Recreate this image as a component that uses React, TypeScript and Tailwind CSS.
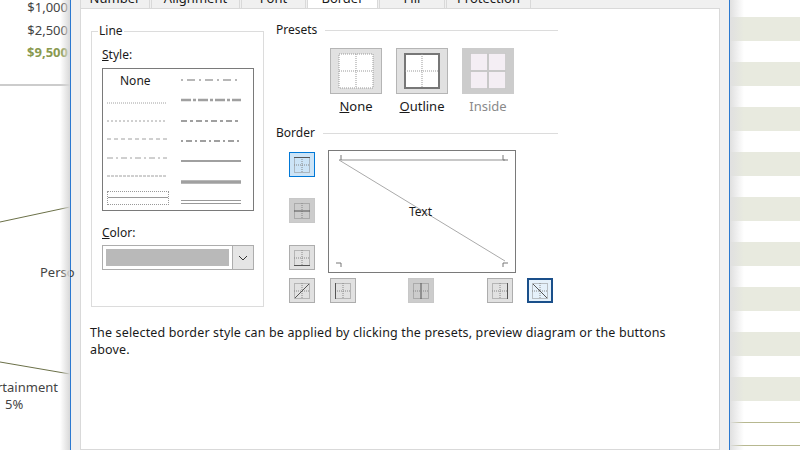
import React from "react";

const F = { fontFamily: '"Noto Sans","Open Sans",sans-serif' };

function Grid({ top, bottom, left, right, diagUp, diagDown, midH, midV, size = 16 }: any) {
  const s = size;
  const d = "1 1";
  const c = "#888";
  const solid = "#555";
  return (
    <svg width={s} height={s} viewBox={`0 0 ${s} ${s}`}>
      <rect x="0.5" y="0.5" width={s - 1} height={s - 1} fill="none" stroke={c} strokeDasharray={d} />
      <line x1={s / 2} y1="0" x2={s / 2} y2={s} stroke={midV ? solid : c} strokeDasharray={midV ? undefined : d} />
      <line x1="0" y1={s / 2} x2={s} y2={s / 2} stroke={midH ? solid : c} strokeDasharray={midH ? undefined : d} />
      {top && <line x1="0" y1="0.5" x2={s} y2="0.5" stroke={solid} />}
      {bottom && <line x1="0" y1={s - 0.5} x2={s} y2={s - 0.5} stroke={solid} />}
      {left && <line x1="0.5" y1="0" x2="0.5" y2={s} stroke={solid} />}
      {right && <line x1={s - 0.5} y1="0" x2={s - 0.5} y2={s} stroke={solid} />}
      {diagUp && <line x1="1" y1={s - 1} x2={s - 1} y2="1" stroke={solid} />}
      {diagDown && <line x1="1" y1="1" x2={s - 1} y2={s - 1} stroke={solid} />}
    </svg>
  );
}

function Btn({ children, sel, dis, dark, cls }: any) {
  return (
    <div
      className={
        "w-[26px] h-[25px] flex items-center justify-center border " +
        (dark
          ? "border-[#1a4f8a] border-2 bg-[#e5f1fb] "
          : sel
          ? "border-[#0078d7] bg-[#cce4f7] "
          : dis
          ? "border-[#c8c8c8] bg-[#cccccc] "
          : "border-[#adadad] bg-[#e1e1e1] ") +
        (cls || "")
      }
    >
      {children}
    </div>
  );
}

function LineSample({ dash, w = 2, dbl }: any) {
  return (
    <svg width="60" height="6">
      {dbl ? (
        <>
          <line x1="0" y1="1.5" x2="60" y2="1.5" stroke="#999" />
          <line x1="0" y1="4.5" x2="60" y2="4.5" stroke="#999" />
        </>
      ) : (
        <line x1="0" y1="3" x2="60" y2="3" stroke="#a0a0a0" strokeWidth={w} strokeDasharray={dash} />
      )}
    </svg>
  );
}

export default function App() {
  const tabs = [
    ["Number", 70],
    ["Alignment", 89],
    ["Font", 65],
    ["Border", 71],
    ["Fill", 66],
    ["Protection", 85],
  ] as const;
  const stripes = [17, 62, 107, 152, 197, 242, 287, 332, 377];
  return (
    <div className="w-[800px] h-[450px] overflow-hidden bg-white flex text-[#1a1a1a]" style={F}>
      {/* left sheet */}
      <div className="relative w-[70px] h-full text-[13px] text-[#444]">
        <div className="absolute right-[2px] top-[-2px]">$1,000</div>
        <div className="absolute right-[2px] top-[21px]">$2,500</div>
        <div className="absolute right-[2px] top-[43px] font-bold text-[#8a9a50]">$9,500</div>
        <svg className="absolute left-0 top-0" width="70" height="450">
          <line x1="0" y1="85" x2="70" y2="85" stroke="#999" />
          <line x1="0" y1="222" x2="70" y2="207" stroke="#6b7048" />
          <line x1="0" y1="362" x2="70" y2="374" stroke="#6b7048" />
        </svg>
        <div className="absolute left-[40px] top-[263px]">Perso</div>
        <div className="absolute left-[-3px] top-[378px]">rtainment</div>
        <div className="absolute left-[5px] top-[395px]">5%</div>
        <div className="absolute right-0 top-0 h-full w-[10px] bg-gradient-to-r from-transparent to-[#d8d8d8]" />
      </div>
      {/* dialog */}
      <div className="w-[660px] h-full bg-[#f0f0f0] border-x border-[#2b79d0] flex flex-col px-[9px]">
        <div className="h-[8px] flex">
          {tabs.map(([t, w]) => (
            <div
              key={t}
              style={{ width: w }}
              className={
                "h-[8px] border-x border-[#d9d9d9] text-[13px] leading-[16px] flex justify-center items-start mr-[1px] overflow-hidden " +
                (t === "Border" ? "bg-white" : "bg-[#f0f0f0]")
              }
            >
              <span className="-mt-[10px] whitespace-nowrap">{t}</span>
            </div>
          ))}
        </div>
        <div className="flex-1 bg-white border border-[#d9d9d9] relative text-[12px]">
          {/* Line group */}
          <div className="absolute left-[10px] top-[22px] w-[173px] h-[276px] border border-[#dcdcdc]">
            <span className="absolute left-[6px] top-[-10px] bg-white px-[1px] leading-[18px]">Line</span>
            <div className="absolute left-[10px] top-[15px] leading-[16px]"><u>S</u>tyle:</div>
            <div className="absolute left-[10px] top-[36px] w-[152px] h-[143px] border border-[#7a7a7a] flex px-[4px] py-[5px] gap-[12px]">
              <div className="flex flex-col justify-between w-[62px]">
                <div className="text-[12px] leading-[14px] pl-[13px]">None</div>
                <LineSample dash="1 1" w={1} />
                <LineSample dash="2 2" w={1} />
                <LineSample dash="4 3" w={1} />
                <LineSample dash="6 3 2 3" w={1} />
                <LineSample dash="3 1" w={1} />
                <div className="h-[14px] border border-dotted border-[#999] flex items-center"><div className="w-full border-t border-[#999]" /></div>
              </div>
              <div className="flex flex-col justify-between w-[62px] pt-[3px]">
                <LineSample dash="2 4 8 4" w={1.5} />
                <LineSample dash="10 2 3 2" w={2.5} />
                <LineSample dash="6 3 3 3" w={2} />
                <LineSample dash="2 3 6 3" w={2} />
                <LineSample w={2} />
                <LineSample w={3.5} />
                <LineSample dbl />
              </div>
            </div>
            <div className="absolute left-[10px] top-[193px] leading-[16px]"><u>C</u>olor:</div>
            <div className="absolute left-[10px] top-[213px] w-[152px] h-[25px] border border-[#adadad] flex">
              <div className="flex-1 m-[3px] bg-[#b9b9b9]" />
              <div className="w-[21px] bg-[#e5e5e5] border-l border-[#adadad] flex items-center justify-center">
                <svg width="10" height="6"><path d="M1 1 L5 5 L9 1" fill="none" stroke="#333" /></svg>
              </div>
            </div>
          </div>
          {/* Presets */}
          <div className="absolute left-[195px] top-[13px] w-[282px] flex items-center gap-[8px]">
            <span className="leading-[16px]">Presets</span>
            <div className="flex-1 border-t border-[#dcdcdc]" />
          </div>
          <div className="absolute left-[249px] top-[39px] flex gap-[14px]">
            {[
              ["None", "", ""],
              ["Outline", "o", ""],
              ["Inside", "", "i"],
            ].map(([n, o, i]) => (
              <div key={n} className="flex flex-col items-center w-[52px]">
                <div className={"w-[52px] h-[46px] border flex items-center justify-center " + (i ? "bg-[#cccccc] border-[#cccccc]" : "bg-[#e1e1e1] border-[#b5b5b5]")}>
                  <svg width="36" height="36">
                    {i ? (
                      <>
                        <rect x="0.5" y="0.5" width="35" height="35" fill="#f4eef4" stroke="#bbb" strokeDasharray="1 1" />
                        <line x1="18" y1="0" x2="18" y2="36" stroke="#c8c8c8" strokeWidth="2" />
                        <line x1="0" y1="18" x2="36" y2="18" stroke="#c8c8c8" strokeWidth="2" />
                      </>
                    ) : (
                      <>
                        <rect x="1" y="1" width="34" height="34" fill="#fff" stroke={o ? "#777" : "#999"} strokeWidth={o ? 2 : 1} strokeDasharray={o ? undefined : "1 1"} />
                        <line x1="18" y1="1" x2="18" y2="35" stroke="#999" strokeDasharray="1 1" />
                        <line x1="1" y1="18" x2="35" y2="18" stroke="#999" strokeDasharray="1 1" />
                      </>
                    )}
                  </svg>
                </div>
                <div className={"mt-[4px] text-[13px] leading-[16px] " + (i ? "text-[#8a8a8a]" : "")}>
                  {i ? n : <><u>{n[0]}</u>{n.slice(1)}</>}
                </div>
              </div>
            ))}
          </div>
          {/* Border */}
          <div className="absolute left-[195px] top-[116px] w-[282px] flex items-center gap-[8px]">
            <span className="leading-[16px]">Border</span>
            <div className="flex-1 border-t border-[#dcdcdc]" />
          </div>
          <div className="absolute left-[208px] top-[143px] flex flex-col">
            <Btn sel cls="mb-[21px]"><Grid top /></Btn>
            <Btn dis cls="mb-[22px]"><Grid midH /></Btn>
            <Btn cls="mb-[8px]"><Grid bottom /></Btn>
            <Btn><Grid diagUp /></Btn>
          </div>
          <div className="absolute left-[247px] top-[141px] w-[188px] h-[123px] border border-[#7a7a7a]">
            <svg className="absolute inset-0" width="186" height="121">
              <line x1="10" y1="9" x2="176" y2="9" stroke="#c8c8c8" strokeWidth="2" />
              <line x1="10" y1="9" x2="176" y2="110" stroke="#aaa" />
              <path d="M12 4 V9" stroke="#777" fill="none" />
              <path d="M174 4 V9 H179" stroke="#777" fill="none" />
              <path d="M7 112 H12 V116" stroke="#777" fill="none" />
              <path d="M179 112 H174 V116" stroke="#777" fill="none" />
            </svg>
            <div className="absolute left-[80px] top-[52px] text-[12px]">Text</div>
          </div>
          <div className="absolute left-[249px] top-[269px] flex">
            <Btn cls="mr-[52px]"><Grid left /></Btn>
            <Btn dis cls="mr-[53px]"><Grid midV /></Btn>
            <Btn cls="mr-[14px]"><Grid right /></Btn>
            <Btn dark><Grid diagDown /></Btn>
          </div>
          <div className="absolute left-[9px] top-[315px] text-[12.5px] leading-[17px] w-[618px] tracking-[0.15px]">
            The selected border style can be applied by clicking the presets, preview diagram or the buttons above.
          </div>
        </div>
      </div>
      {/* right sheet */}
      <div className="relative w-[70px] h-full">
        {stripes.map((y) => (
          <div key={y} className="absolute left-0 right-0 h-[24px] bg-[#e8eadf]" style={{ top: y }} />
        ))}
        <div className="absolute left-0 right-0 top-[422px] border-t border-[#b7b890]" />
        <div className="absolute left-0 right-0 top-[445px] border-t border-[#b7b890]" />
        <div className="absolute left-0 top-0 h-full w-[14px] bg-gradient-to-r from-[#e0e0e0] to-transparent" />
      </div>
    </div>
  );
}
